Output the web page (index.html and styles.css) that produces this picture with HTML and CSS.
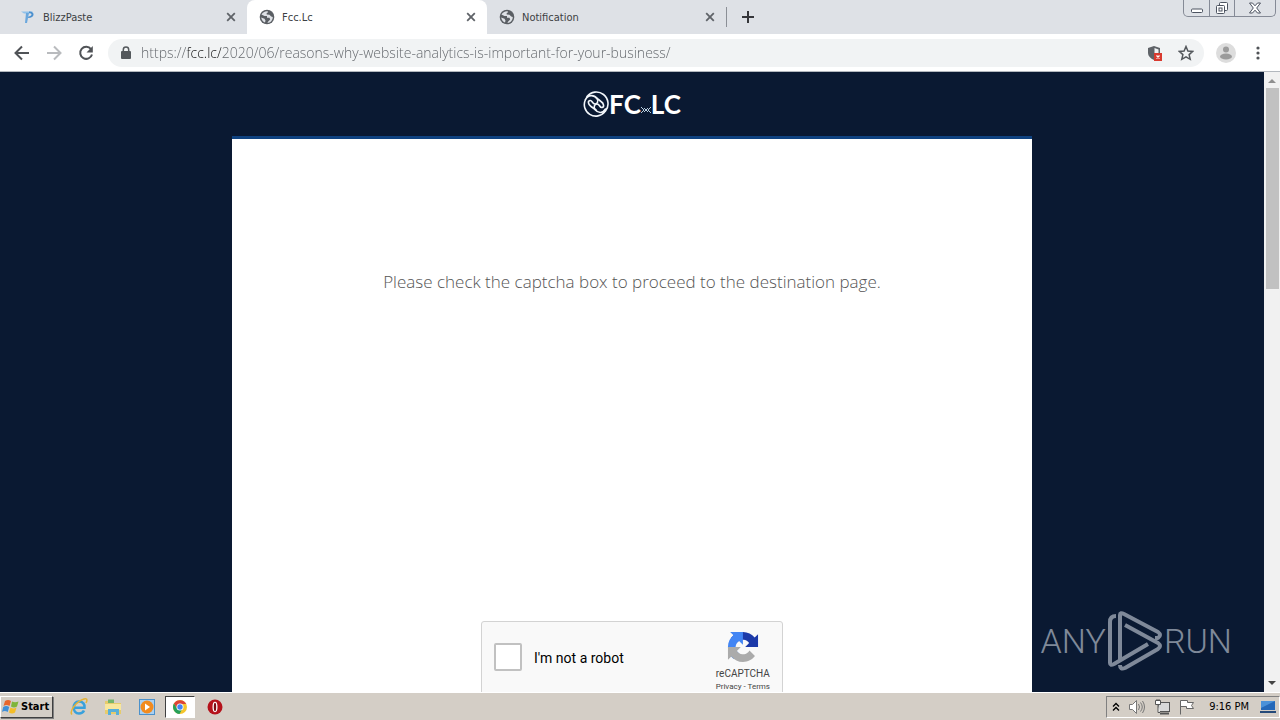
FILE: index.html
```
<!DOCTYPE html>
<html lang="en">
<head>
  <meta charset="utf-8">
  <meta name="viewport" content="width=device-width, initial-scale=1.0">
  <title>Fcc.Lc</title>
  <link rel="stylesheet" href="styles.css">
</head>
<body>
  <!-- shared shapes -->
  <svg class="defs" width="0" height="0">
    <symbol id="globe" viewBox="0 0 16 16">
      <circle cx="8" cy="8" r="7.3" fill="#5a5e63"/>
      <path d="M8.500 2.200C6 2 3.600 3.300 2.500 5.500L5.500 7h2.500v1.800h2.500l.7 1.700-2 2-.8 1.500c3-.2 5.400-2.700 5.400-6l-1.600-.5-1.700-1.700-2.800-.3V4l1.500-.7z" fill="#dee1e6"/>
      <path d="M2.200 8.500l3.300 1.200 1 1.800-.5 2C3.800 12.600 2.400 10.800 2.200 8.500z" fill="#dee1e6"/>
    </symbol>
    <symbol id="cross" viewBox="0 0 10 10">
      <path d="M1.200 1.200l7.600 7.600M8.800 1.200L1.200 8.800" stroke="#5f6368" stroke-width="1.800" fill="none"/>
    </symbol>
  </svg>

  <!-- TABS -->
  <header class="tabs">
    <div class="tab">
      <svg class="favicon" viewBox="0 0 16 16"><path d="M1 2.500h12l-3 2H4z" fill="#8fc1ea"/><path d="M6 4h3L7 14H5z" fill="#6aa7dd"/><path d="M9 2.500c6-.5 6.500 6.500-1 6.500l.4-1.500c4-.3 4-3.500.6-3.500z" fill="#4b90cf"/></svg>
      <span class="tab-title">BlizzPaste</span>
      <button class="icon-btn" aria-label="Close tab"><svg width="10" height="10"><use href="#cross"/></svg></button>
    </div>
    <div class="tab active">
      <svg class="favicon"><use href="#globe"/></svg>
      <span class="tab-title">Fcc.Lc</span>
      <button class="icon-btn" aria-label="Close tab"><svg width="10" height="10"><use href="#cross"/></svg></button>
    </div>
    <div class="tab last">
      <svg class="favicon"><use href="#globe"/></svg>
      <span class="tab-title">Notification</span>
      <button class="icon-btn" aria-label="Close tab"><svg width="10" height="10"><use href="#cross"/></svg></button>
    </div>
    <button class="icon-btn new-tab" aria-label="New tab"><svg width="12" height="12" viewBox="0 0 12 12"><path d="M6 0v12M0 6h12" stroke="#35363a" stroke-width="2"/></svg></button>
    <div class="window-controls">
      <button aria-label="Minimize"><svg width="14" height="14" viewBox="0 0 14 14"><rect x="1.500" y="8" width="11" height="3.500" rx="1" fill="#fff" stroke="#4c5360"/></svg></button>
      <button aria-label="Restore"><svg width="14" height="14" viewBox="0 0 14 14" fill="#fff" stroke="#4c5360"><rect x="4.500" y="1.500" width="8" height="8" rx="1"/><rect x="1.500" y="4.500" width="8" height="8" rx="1"/><rect x="4" y="7" width="3" height="3"/></svg></button>
      <button class="wide" aria-label="Close"><svg width="12" height="12" viewBox="0 0 12 12"><path d="M.5 1h3L6 3.800 8.500 1h3L7.700 6l3.800 5h-3L6 8.200 3.500 11h-3L4.300 6z" fill="#fff" stroke="#4c5360"/></svg></button>
    </div>
  </header>

  <!-- TOOLBAR -->
  <nav class="toolbar">
    <button class="icon-btn" aria-label="Back"><svg width="16" height="16" viewBox="0 0 16 16"><path d="M15 8H2M8 1.500L1.500 8 8 14.500" fill="none" stroke="#505357" stroke-width="2"/></svg></button>
    <button class="icon-btn" aria-label="Forward"><svg width="16" height="16" viewBox="0 0 16 16"><path d="M1 8h13M8 1.500L14.500 8 8 14.500" fill="none" stroke="#b9bbbe" stroke-width="2"/></svg></button>
    <button class="icon-btn" aria-label="Reload"><svg width="16" height="16" viewBox="0 0 16 16"><path d="M13 4.200A6 6 0 1 0 14 9.500" fill="none" stroke="#505357" stroke-width="2"/><path d="M14.800 1v6.500H8.500z" fill="#505357"/></svg></button>
    <div class="omnibox">
      <svg width="10" height="14" viewBox="0 0 10 14"><rect y="5" width="10" height="8" rx="1" fill="#54585c"/><path d="M2.300 6V3.800a2.700 2.700 0 0 1 5.400 0V6" fill="none" stroke="#54585c" stroke-width="1.500"/></svg>
      <input class="url" type="text" aria-label="Address" value="https://fcc.lc/2020/06/reasons-why-website-analytics-is-important-for-your-business/">
      <svg width="16" height="16" viewBox="0 0 16 16"><path d="M7 1l6 2v5c0 3-2.500 5.500-6 7-3.500-1.500-6-4-6-7V3z" fill="#5f6368"/><path d="M7.500 3l4 1.500V8h-4z" fill="#f1f3f4"/><rect x="7" y="8" width="8" height="8" fill="#d93a2f"/><path d="M9.500 10.500l3 3m0-3l-3 3" stroke="#fff" stroke-width="1.300"/></svg>
      <svg width="16" height="16" viewBox="0 0 16 16"><path d="M8 1.500l1.900 4.500 4.800.4-3.600 3.200 1.100 4.700L8 11.800l-4.200 2.500 1.100-4.700L1.300 6.400 6.100 6z" fill="none" stroke="#54585c" stroke-width="1.500"/></svg>
    </div>
    <button class="icon-btn" aria-label="Profile"><svg width="20" height="20" viewBox="0 0 20 20"><circle cx="10" cy="10" r="10" fill="#dddddd"/><circle cx="10" cy="6.500" r="3" fill="#9b9b9b"/><ellipse cx="10" cy="13.500" rx="6" ry="3" fill="#9b9b9b"/></svg></button>
    <button class="icon-btn menu" aria-label="Menu"><svg width="4" height="14" viewBox="0 0 4 14" fill="#505357"><circle cx="2" cy="2" r="1.600"/><circle cx="2" cy="7" r="1.600"/><circle cx="2" cy="12" r="1.600"/></svg></button>
  </nav>

  <!-- PAGE -->
  <div class="viewport">
    <main class="page">
      <a class="logo" href="#" aria-label="FC.LC">
        <svg width="26" height="26" viewBox="0 0 26 26" fill="none" stroke="#f2f6fa" stroke-width="1.600" stroke-linecap="round">
          <path d="M4 5.500A11.500 11.500 0 0 1 22.500 20"/>
          <path d="M22 20.500A11.500 11.500 0 0 1 2.500 8.500"/>
          <path d="M2.500 8.500C5 3.500 11 3.500 14 7.500c2 3 0 5.500-2 5.500-3 0-2.500-4-5-3.500s-2 4 1 6l5 3.500"/>
          <path d="M22.500 18C20 22.500 15 22.500 12 18.500c-2-3 0-5.500 2-5.500 3 0 2.500 4 5 3.500s2-4-1-6L13.500 7"/>
        </svg>
        <span>FC</span>
        <svg width="10" height="8" viewBox="0 0 10 8" fill="none" stroke="#b9cfe0"><path d="M0 1l3 3-3 3M10 1L7 4l3 3M3 2l4 4m0-4L3 6"/></svg>
        <span>LC</span>
      </a>
      <section class="content">
        <p class="notice">Please check the captcha box to proceed to the destination page.</p>
        <div class="captcha">
          <input type="checkbox" id="robot">
          <label for="robot">I'm not a robot</label>
          <div class="captcha-brand">
            <svg width="32" height="32" viewBox="-2 -2 68 68">
              <path d="M64 31.955l-.033-1.370V4.687l-7.160 7.160C50.948 4.674 42.033.093 32.050.093c-10.400 0-19.622 4.960-25.458 12.640l11.736 11.860a15.550 15.550 0 0 1 4.754-5.334c2.050-1.600 4.952-2.906 8.968-2.906.485 0 .86.057 1.135.163 4.976.393 9.288 3.140 11.828 7.124l-8.307 8.307L64 31.953" fill="#1c3aa9"/>
              <path d="M31.862.094l-1.370.033H4.594l7.160 7.160C4.580 13.147 0 22.060 0 32.046c0 10.400 4.960 19.622 12.640 25.458L24.500 45.768a15.550 15.550 0 0 1-5.334-4.754c-1.600-2.050-2.906-4.952-2.906-8.968 0-.485.057-.86.163-1.135.393-4.976 3.140-9.288 7.124-11.828l8.307 8.307L31.860.095" fill="#4285f4"/>
              <path d="M.001 32.045l.033 1.370v25.898l7.160-7.160c5.860 7.173 14.774 11.754 24.760 11.754 10.400 0 19.622-4.960 25.458-12.640l-11.736-11.860a15.550 15.550 0 0 1-4.754 5.334c-2.050 1.600-4.952 2.906-8.968 2.906-.485 0-.86-.057-1.135-.163-4.976-.393-9.288-3.140-11.828-7.124l8.307-8.307c-10.522.04-22.400.066-27.295-.005" fill="#ababab"/>
            </svg>
            <span class="brand-name">reCAPTCHA</span>
            <span class="brand-links"><a href="#">Privacy</a> - <a href="#">Terms</a></span>
          </div>
        </div>
      </section>
    </main>
    <div class="scrollbar">
      <svg width="16" height="16" viewBox="0 0 16 16"><path d="M4 11l4-4 4 4z" fill="#8f8f8f"/></svg>
      <div class="thumb"></div>
      <svg class="down" width="16" height="16" viewBox="0 0 16 16"><path d="M4 5l4 4 4-4z" fill="#444"/></svg>
    </div>
    <div class="watermark">
      <span>ANY</span>
      <svg width="54" height="62" viewBox="0 0 54 62" fill="none" stroke="currentColor" stroke-width="4" stroke-linejoin="round"><path d="M8 6q-6 0-6 6v41q0 3 4 1l34-20"/><path d="M12 51V5q0-3 4-1l34 18q4 3 0 6l-3 0"/><path d="M17 15l33 18q4 3 0 6L17 58q-5 2-5-3"/></svg>
      <span>RUN</span>
    </div>
  </div>

  <!-- TASKBAR -->
  <footer class="taskbar">
    <button class="start">
      <svg width="18" height="16" viewBox="0 0 18 16"><path d="M3 2c2-1.500 4-1.500 6 0L7.500 7c-2-1.300-4-1.300-6 0z" fill="#e8662c"/><path d="M10 2.500c2 1 4 1 6.500 0L15 7.500c-2 1.200-4 1.200-6 0z" fill="#7fb539"/><path d="M1.200 8c2-1.300 4-1.300 6 0l-1.500 5c-2-1.300-4-1.300-5.700 0z" fill="#3f8fd8"/><path d="M8.500 8.500c2 1.200 4 1.200 6 0l-1.500 5c-2 1.200-4 1.200-6 0z" fill="#f4bd27"/></svg>
      Start
    </button>
    <div class="launch">
      <button aria-label="Internet Explorer"><svg width="18" height="18" viewBox="0 0 18 18" fill="none"><path d="M14 12.500c-1 2-3 3-5 3-7 0-7-12 0-12 4 0 6 3 5.500 6.200H5" stroke="#39a1dc" stroke-width="2.600"/><path d="M2 16.500c-3-3 4-13 12-15.500 4-1 3 2 2 4" stroke="#e5b436" stroke-width="1.500"/></svg></button>
      <button aria-label="Explorer"><svg width="18" height="18" viewBox="0 0 18 18"><path d="M1 3h6l1 2h9v11H1z" fill="#e6cb6c"/><path d="M4 1.500h6V5H4z" fill="#74b56a"/><path d="M1 6h16v6H1z" fill="#f8e79d"/><path d="M4 17v-6h11v6h-3v-3H7v3z" fill="#58afd9"/></svg></button>
      <button aria-label="Media Player"><svg width="18" height="18" viewBox="0 0 18 18"><rect x="1.500" y="1.500" width="15" height="15" fill="#a9d0f2" stroke="#4b91cb"/><circle cx="9" cy="9" r="6.500" fill="#f28b1e"/><path d="M7 5.500l5 3.500-5 3.500z" fill="#fff"/></svg></button>
      <button class="running" aria-label="Chrome"><svg width="16" height="16" viewBox="0 0 16 16"><circle cx="8" cy="8" r="7" fill="#f5c52c"/><path d="M1.900 4.600A7 7 0 0 1 14.200 5H8L5 9.500z" fill="#dc4437"/><path d="M1.900 4.600A7 7 0 0 0 7.500 15l3-5.500H5z" fill="#26a05a"/><circle cx="8" cy="8" r="3.500" fill="#fff"/><circle cx="8" cy="8" r="2.700" fill="#4285f4"/></svg></button>
      <button aria-label="Opera"><svg width="18" height="18" viewBox="0 0 18 18"><circle cx="9" cy="9" r="7.500" fill="#b5121b"/><ellipse cx="9" cy="9" rx="2.500" ry="5.200" fill="#fff"/><ellipse cx="9" cy="9" rx="1.200" ry="4.200" fill="#7c0c12"/></svg></button>
    </div>
    <div class="tray">
      <svg width="8" height="10" viewBox="0 0 8 10" fill="none" stroke="#000" stroke-width="1.300"><path d="M1 4.500l3-3 3 3M1 8.500l3-3 3 3"/></svg>
      <svg width="18" height="16" viewBox="0 0 18 16" fill="none" stroke="#777"><path d="M1.500 5.500h3l4-4v13l-4-4h-3z" fill="#fff"/><path d="M10.500 5q2 3 0 6M12.500 3.500q3.500 4.500 0 9M14.500 2q4 6 0 12"/></svg>
      <svg width="16" height="16" viewBox="0 0 16 16" fill="none" stroke="#555"><rect x="4.500" y="3.500" width="11" height="9" fill="#d8d8d8"/><path d="M6 14.500h9" stroke-width="2"/><path d="M1.500 1.500h5v4h-5zM4 5.500v8h2M3 0v2M5 0v2" fill="#fff"/></svg>
      <svg width="18" height="16" viewBox="0 0 18 16"><path d="M2.500 1.500v14M2.500 1.500h7v2h6l-2 3 2 3h-7v-2h-6" fill="#fff" stroke="#666"/></svg>
      <time>9:16 PM</time>
      <svg width="16" height="14" viewBox="0 0 16 14"><path d="M1 1h14v9H1z" fill="#2468b9"/><path d="M1 1h14L1 8z" fill="#4a91d9"/><path d="M0 11h16v2H0z" fill="#254a79"/></svg>
    </div>
  </footer>
</body>
</html>
```
FILE: styles.css
```
* {
  box-sizing: border-box;
}

body {
  margin: 0;
  height: 100vh;
  display: flex;
  flex-direction: column;
  overflow: hidden;
  font-family: "DejaVu Sans Condensed", Tahoma, sans-serif;
  font-size: 11px;
  color: #3c4043;
}

button {
  border: 0;
  padding: 0;
  background: none;
  font: inherit;
  color: inherit;
}

svg {
  display: block;
  flex: none;
}

a {
  color: inherit;
  text-decoration: none;
}

.defs {
  position: absolute;
}

/* TABS */
.tabs {
  display: flex;
  height: 34px;
  background: #dee1e6;
}

.tab {
  display: flex;
  align-items: center;
  width: 240px;
  padding: 0 11px 0 12px;
}

.tab:first-child {
  width: 247px;
  padding-left: 20px;
}

.tab.active {
  background: #fff;
  border-radius: 8px 8px 0 0;
}

.tab.last {
  border-right: 1px solid #8b8f96;
  height: 20px;
  margin-top: 7px;
}

.favicon {
  width: 16px;
  height: 16px;
}

.tab-title {
  flex: 1;
  margin-left: 7px;
}

.icon-btn {
  display: flex;
  align-items: center;
  justify-content: center;
}

.new-tab {
  width: 42px;
}

.window-controls {
  display: flex;
  align-self: flex-start;
  height: 17px;
  margin: 0 4px 0 auto;
  border: 1px solid #858a96;
  border-top: 0;
  border-radius: 0 0 5px 5px;
}

.window-controls button {
  display: flex;
  align-items: center;
  justify-content: center;
  width: 25px;
}

.window-controls button + button {
  border-left: 1px solid #858a96;
}

.window-controls .wide {
  width: 41px;
}

/* TOOLBAR */
.toolbar {
  display: flex;
  align-items: center;
  gap: 16px;
  height: 38px;
  padding: 0 20px 0 14px;
  background: #fff;
  border-bottom: 1px solid #b3b8be;
}

.omnibox {
  display: flex;
  flex: 1;
  align-items: center;
  gap: 15px;
  height: 28px;
  padding: 0 10px 0 13px;
  margin: 0 -4px 0 -2px;
  border-radius: 14px;
  background: #f1f3f4;
}

.menu {
  margin-left: 4px;
}

.url {
  flex: 1;
  margin-left: -5px;
  border: 0;
  padding: 0;
  outline: 0;
  font: 300 14px/20px "Open Sans", sans-serif;
  /* host part is darker than the rest */
  background: linear-gradient(90deg, #5f6368 47px, #111 47px, #111 80px, #5f6368 80px);
  -webkit-background-clip: text;
  background-clip: text;
  -webkit-text-fill-color: transparent;
}

/* PAGE */
.viewport {
  position: relative;
  display: flex;
  flex: 1;
  min-height: 0;
  background: #0a1932;
}

.page {
  display: flex;
  flex: 1;
  flex-direction: column;
  align-items: center;
  overflow: hidden;
}

.logo {
  display: flex;
  flex: none;
  align-items: center;
  height: 64px;
  color: #fff;
  font: bold 26px/32px Lato, sans-serif;
}

.logo span + svg {
  align-self: flex-end;
  margin-bottom: 22px;
}

.content {
  display: flex;
  flex: 1 0 auto;
  flex-direction: column;
  align-items: center;
  width: 800px;
  max-width: 100%;
  border-top: 3px solid #0f4280;
  background: #fff;
}

.notice {
  margin: 131px 0 327px;
  color: #555;
  font: 300 17px/24px "Open Sans", sans-serif;
}

.captcha {
  display: flex;
  align-items: flex-start;
  width: 302px;
  height: 76px;
  padding: 9px 12px 0 12px;
  border: 1px solid #d3d3d3;
  border-radius: 3px;
  background: #f9f9f9;
}

.captcha input {
  appearance: none;
  width: 28px;
  height: 28px;
  margin: 12px 12px 0 0;
  border: 2px solid #c1c1c1;
  border-radius: 2px;
  background: #fff;
}

.captcha label {
  flex: 1;
  margin-top: 17px;
  color: #000;
  font: 14px/20px Roboto, sans-serif;
}

.captcha-brand {
  display: flex;
  flex-direction: column;
  align-items: center;
  color: #444;
  font-family: Roboto, sans-serif;
}

.brand-name {
  margin-top: 4px;
  font-size: 10px;
  line-height: 14px;
}

.brand-links {
  font-size: 8px;
  line-height: 12px;
}

.scrollbar {
  display: flex;
  flex-direction: column;
  width: 16px;
  background: #f1f1f1;
}

.thumb {
  height: 201px;
  margin: 0 1px 0 2px;
  background: #c1c1c1;
}

.down {
  margin-top: auto;
}

/* sits over the page in the corner */
.watermark {
  position: absolute;
  right: 48px;
  bottom: 20px;
  display: flex;
  align-items: center;
  gap: 2px;
  color: #7f8999;
  font: 300 34px/62px Roboto, sans-serif;
}

/* TASKBAR */
.taskbar {
  display: flex;
  align-items: center;
  height: 28px;
  border-top: 1px solid #fff;
  background: #d4cec6;
  color: #000;
}

.start {
  display: flex;
  align-items: center;
  gap: 1px;
  height: 22px;
  padding: 0 3px 0 1px;
  border: 1px solid;
  border-color: #fff #404040 #404040 #fff;
  box-shadow: 1px 1px 0 #808080;
  font-weight: bold;
}

.launch {
  display: flex;
  align-items: center;
  margin-left: 9px;
}

.launch button {
  display: flex;
  align-items: center;
  justify-content: center;
  width: 34px;
  height: 24px;
}

.launch .running {
  width: 30px;
  height: 22px;
  margin: 0 3px 0 1px;
  border: 1px solid;
  border-color: #404040 #fff #fff #404040;
  background: #fff;
}

.tray {
  display: flex;
  align-items: center;
  gap: 8px;
  height: 22px;
  margin-left: auto;
  padding: 0 3px 0 5px;
  border: 1px solid;
  border-color: #808080 #fff #fff #808080;
}

.tray time {
  margin: 0 3px 0 5px;
}
```
